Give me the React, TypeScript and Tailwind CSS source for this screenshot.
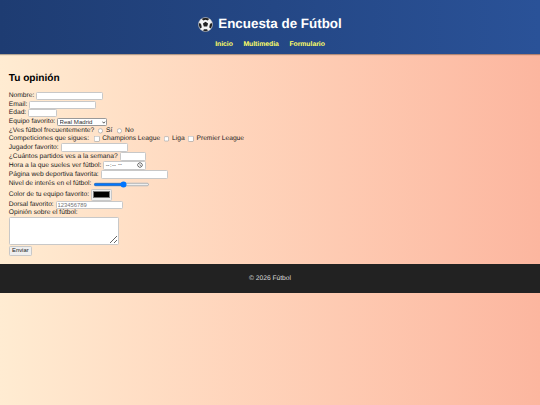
import React from 'react';

const textInput = "[zoom:0.4375] w-[153px] h-[19px] px-[2px] border-2 border-[#c8c8c8] rounded-[3px] bg-white text-[13.33px] font-['Liberation_Sans',Arial,sans-serif]";
const row = 'flex items-center gap-[2px]';

function SoccerBall() {
  return (
    <svg viewBox="0 0 32 32" className="w-[15px] h-[15px]">
      <circle cx="16" cy="16" r="15" fill="#f4f4f4" />
      <polygon points="16,10 21.5,14 19.5,20.5 12.5,20.5 10.5,14" fill="#222" />
      <path d="M16 1.5 a15 15 0 0 1 8 2.4 L21 7.5 L16 6 L11 7.5 L8 3.9 A15 15 0 0 1 16 1.5Z" fill="#222" />
      <path d="M30.5 15 a15 15 0 0 1 -3 9.5 L24 22.5 L25 16.5 L28 12Z" fill="#222" />
      <path d="M1.5 15 a15 15 0 0 0 3 9.5 L8 22.5 L7 16.5 L4 12Z" fill="#222" />
      <path d="M11 30 a15 15 0 0 0 10 0 L19.5 26 L12.5 26Z" fill="#222" />
      <circle cx="16" cy="16" r="15" fill="none" stroke="#bbb" strokeWidth="1" />
    </svg>
  );
}

export default function App() {
  return (
    <div className="min-h-[405px] bg-gradient-to-r from-[#ffecd2] to-[#fcb69f] font-['Liberation_Sans',Arial,sans-serif] text-[6.7px] leading-[8px] text-[#1a1a1a] [text-rendering:geometricPrecision]">
      <header className="h-[54px] bg-gradient-to-r from-[#1e3c72] to-[#2a5298] text-white text-center pt-[16px] shadow-[0_1px_1px_rgba(0,0,0,0.3)]">
        <h1 className="flex items-center justify-center gap-[5px] text-[13.4px] leading-[16px] font-bold">
          <SoccerBall />
          <span>Encuesta de Fútbol</span>
        </h1>
        <nav className="flex justify-center gap-[10.5px] mt-[9px] text-[6.8px] leading-[8px] font-bold text-[#ffff66]">
          <a href="#">Inicio</a>
          <a href="#">Multimedia</a>
          <a href="#">Formulario</a>
        </nav>
      </header>

      <main className="px-[8.75px] pt-[18.5px] h-[210px]">
        <h2 className="text-[10.1px] leading-[12px] font-bold text-black mb-[7.5px]">Tu opinión</h2>
        <form>
          <div className={`${row} h-[8.5px]`}>
            <label>Nombre:</label>
            <input type="text" className={textInput} />
          </div>
          <div className={`${row} h-[8.5px]`}>
            <label>Email:</label>
            <input type="email" className={textInput} />
          </div>
          <div className={`${row} h-[8.5px]`}>
            <label>Edad:</label>
            <input type="number" className={`${textInput} !w-[66px]`} />
          </div>
          <div className={`${row} h-[9px]`}>
            <label>Equipo favorito:</label>
            <div className="relative flex">
              <select className="[zoom:0.4375] w-[114px] h-[18px] pl-[3px] appearance-none border border-[#999999] rounded-[3px] bg-white text-[14px] font-['Liberation_Sans',Arial,sans-serif] text-[#333333]">
                <option>Real Madrid</option>
                <option>Barcelona</option>
                <option>Atlético de Madrid</option>
              </select>
              <svg viewBox="0 0 8 6" className="absolute right-[1.5px] top-[2.5px] w-[3.5px] h-[3px]">
                <path d="M1 1 L4 4.5 L7 1" fill="none" stroke="#111" strokeWidth="1.6" />
              </svg>
            </div>
          </div>
          <div className="flex items-center h-[8.5px]">
            <span>¿Ves fútbol frecuentemente?</span>
            <input type="radio" name="ves" className="[zoom:0.4375] ml-[8px] mr-[6px]" />
            <span>Sí</span>
            <input type="radio" name="ves" className="[zoom:0.4375] ml-[10px] mr-[6px]" />
            <span>No</span>
          </div>
          <div className="flex items-center h-[8px]">
            <span>Competiciones que sigues:</span>
            <input type="checkbox" className="[zoom:0.4375] ml-[11px] mr-[6px]" />
            <span>Champions League</span>
            <input type="checkbox" className="[zoom:0.4375] ml-[8px] mr-[6px]" />
            <span>Liga</span>
            <input type="checkbox" className="[zoom:0.4375] ml-[8px] mr-[6px]" />
            <span>Premier League</span>
          </div>
          <div className={`${row} h-[9px]`}>
            <label>Jugador favorito:</label>
            <input type="text" className={textInput} />
          </div>
          <div className={`${row} h-[9px]`}>
            <label>¿Cuántos partidos ves a la semana?</label>
            <input type="number" className={`${textInput} !w-[61px]`} />
          </div>
          <div className={`${row} h-[9px]`}>
            <label>Hora a la que sueles ver fútbol:</label>
            <input type="time" className={`${textInput} !w-[98px]`} />
          </div>
          <div className={`${row} h-[9px]`}>
            <label>Página web deportiva favorita:</label>
            <input type="url" className={textInput} />
          </div>
          <div className={`${row} h-[10px]`}>
            <label>Nivel de interés en el fútbol:</label>
            <input type="range" defaultValue={55} className="[zoom:0.4375] w-[129px] h-[16px]" />
          </div>
          <div className={`${row} h-[11.6px]`}>
            <label>Color de tu equipo favorito:</label>
            <input
              type="color"
              className="[zoom:0.4375] w-[48px] h-[27px] border-2 border-[#c8c8c8] bg-[#efefef] p-[3px] rounded-[3px] [&::-webkit-color-swatch-wrapper]:p-0"
            />
          </div>
          <div className={`${row} h-[9px]`}>
            <label>Dorsal favorito:</label>
            <input type="tel" placeholder="123456789" className={`${textInput} placeholder:text-[#757575]`} />
          </div>
          <div className="h-[7px] flex items-center">
            <label>Opinión sobre el fútbol:</label>
          </div>
          <textarea className="[zoom:0.4375] block w-[252px] h-[64px] border-2 border-[#c8c8c8] rounded-[3px] bg-white" />
          <button type="button" className="[zoom:0.4375] block mt-[3px] w-[53px] h-[22px] text-[13.33px] bg-[#efefef] border-2 border-[#c8c8c8] rounded-[3px]">
            Enviar
          </button>
        </form>
      </main>

      <footer className="h-[29px] bg-[#222222] text-[#dddddd] flex items-center justify-center">
        © 2026 Fútbol
      </footer>
    </div>
  );
}
